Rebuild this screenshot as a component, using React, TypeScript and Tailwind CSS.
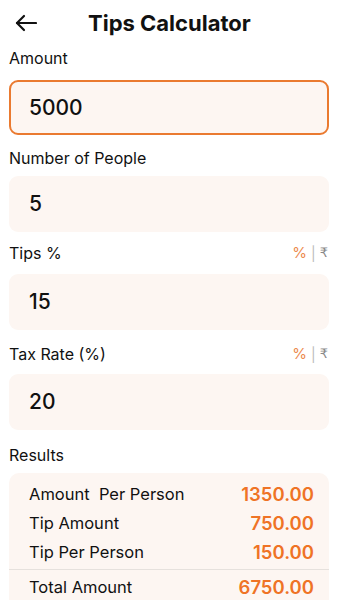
import React from "react";

const Label = ({ text, toggle, className }: { text: string; toggle?: boolean; className?: string }) => (
  <div className={`flex h-6 items-center justify-between ${className ?? ""}`}>
    <span className="text-[16px] text-[#111]">{text}</span>
    {toggle && (
      <span className="mr-[1px] flex items-center gap-[4px] text-[14px]">
        <span className="text-[#ec8a4e] text-[15px]">%</span>
        <span className="text-[#bbb]">|</span>
        <span className="text-[#888] font-['DejaVu_Sans',sans-serif] text-[13px]">₹</span>
      </span>
    )}
  </div>
);

const Field = ({ value, focused, className }: { value: string; focused?: boolean; className?: string }) => (
  <div
    className={`flex items-center rounded-[9px] bg-[#fdf6f2] text-[21px] font-medium text-[#111] ${
      focused ? "h-[55px] border-2 border-[#ea7a30] pl-[18px]" : "h-[56px] pl-[20px]"
    } ${className ?? ""}`}
  >
    {value}
  </div>
);

const Row = ({ label, value, className }: { label: string; value: string; className?: string }) => (
  <div className={`flex h-[29px] items-center justify-between ${className ?? ""}`}>
    <span className="whitespace-pre text-[16.5px] text-[#111]">{label}</span>
    <span className="text-[18.5px] font-semibold text-[#ef7325]">{value}</span>
  </div>
);

export default function App() {
  return (
    <div className="h-[600px] w-[338px] overflow-hidden bg-white font-['Inter',sans-serif]">
      <div className="px-[9px]">
        <div className="relative flex h-[46px] items-center">
          <svg width="22" height="18" viewBox="0 0 22 18" className="ml-[6px]" fill="none" stroke="#111" strokeWidth="2.2" strokeLinecap="round" strokeLinejoin="round">
            <path d="M21 9H2" />
            <path d="M9 2L2 9l7 7" />
          </svg>
          <span className="ml-[51px] text-[22px] font-bold text-[#111]">Tips Calculator</span>
        </div>
        <Label text="Amount" />
        <Field value="5000" focused className="mt-[10px]" />
        <Label text="Number of People" className="mt-[11px]" />
        <Field value="5" className="mt-[6px]" />
        <Label text="Tips %" toggle className="mt-[9px]" />
        <Field value="15" className="mt-[9px]" />
        <Label text="Tax Rate (%)" toggle className="mt-[12px]" />
        <Field value="20" className="mt-[8px]" />
        <Label text="Results" className="mt-[13px]" />
        <div className="mt-[6px] rounded-t-[10px] bg-[#fdf6f2] pt-[7px] pb-4">
          <div className="pl-[20px] pr-[15px]">
            <Row label="Amount  Per Person" value="1350.00" />
            <Row label="Tip Amount" value="750.00" />
            <Row label="Tip Per Person" value="150.00" />
          </div>
          <div className="mt-[2px] h-px bg-[#e6e1dd]" />
          <div className="pl-[20px] pr-[15px] pt-[3px]">
            <Row label="Total Amount" value="6750.00" />
          </div>
        </div>
      </div>
    </div>
  );
}
